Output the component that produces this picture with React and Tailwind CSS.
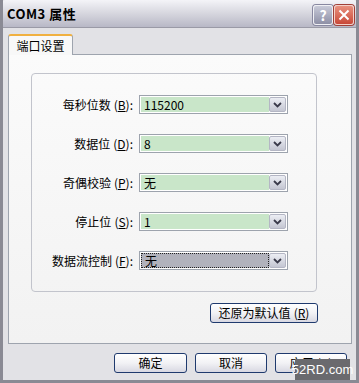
import React from "react";

const font = { fontFamily: '"Noto Sans CJK SC", "Liberation Sans", sans-serif' };

function Key({ k }) {
  return (
    <span className="ml-[3px]">
      (<span className="underline">{k}</span>)
    </span>
  );
}

function Arrow() {
  return (
    <div className="w-[17px] h-full flex items-center justify-center bg-gradient-to-b from-[#eceef4] to-[#c4c6d2] border border-[#b4b6c4] rounded-[2px]">
      <svg width="9" height="6" viewBox="0 0 9 6">
        <path d="M1 1 L4.5 4.5 L8 1" stroke="#3a3a4a" strokeWidth="1.8" fill="none" />
      </svg>
    </div>
  );
}

function Row({ label, k, value, focused }) {
  return (
    <div className="flex items-center h-[19px]">
      <div className="w-[102px] text-right text-[12px] text-black pr-[1px] whitespace-nowrap leading-none">
        {label}
        <Key k={k} />:
      </div>
      <div className="ml-[5px] w-[149px] h-[19px] flex border border-[#9da3ad] bg-white p-[1px]">
        <div
          className={
            "flex-1 flex items-center pl-[3px] text-[12px] leading-none " +
            (focused ? "bg-[#b1b2bc] border border-dotted border-[#222]" : "bg-[#c9e6c9]")
          }
        >
          {value}
        </div>
        <Arrow />
      </div>
    </div>
  );
}

function Btn({ children, w }) {
  return (
    <div
      className={
        "h-[20px] flex items-center justify-center text-[12px] text-black rounded-[3px] border border-[#1f3a6e] bg-gradient-to-b from-[#ffffff] via-[#f2f2f5] to-[#d8d8e2] leading-none " +
        w
      }
    >
      {children}
    </div>
  );
}

export default function App() {
  return (
    <div style={font} className="w-[359px] h-[383px] relative overflow-hidden bg-[#e2e2e6] border-x-[3px] border-b-[3px] border-[#8a8a94] flex flex-col">
      {/* title bar */}
      <div className="h-[28px] -mx-[3px] flex items-center justify-between bg-gradient-to-b from-[#f4f4f8] via-[#d6d6de] to-[#b8b8c6] border-b border-[#9a9aa6] rounded-t-[6px]">
        <div className="pl-[7px] text-[13px] font-bold text-black tracking-[0.5px]">COM3 属性</div>
        <div className="flex gap-[1px] pr-[5px] pt-[3px]">
          <div className="w-[20px] h-[20px] rounded-[3px] border border-[#f0f0f4] bg-gradient-to-b from-[#c8cad8] to-[#8e90a6] flex items-center justify-center text-white text-[14px] font-bold leading-none shadow-[0_0_0_1px_#8888a0]">?</div>
          <div className="w-[20px] h-[20px] rounded-[3px] border border-[#f4d0c8] bg-gradient-to-b from-[#e8907e] to-[#c84838] flex items-center justify-center shadow-[0_0_0_1px_#a04038]">
            <svg width="12" height="12" viewBox="0 0 12 12">
              <path d="M1.5 1.5 L10.5 10.5 M10.5 1.5 L1.5 10.5" stroke="#fff" strokeWidth="2" />
            </svg>
          </div>
        </div>
      </div>

      {/* body */}
      <div className="flex-1 flex flex-col pl-[5px] pr-[4px] pt-[6px]">
        <div className="flex">
          <div className="w-[65px] h-[21px] -mb-[1px] relative z-10 bg-[#f8f8f8] border-x border-[#9ea4ae] border-t-[2px] border-t-[#f0b040] rounded-t-[3px] flex items-center justify-center text-[12px] leading-none">
            端口设置
          </div>
        </div>
        <div className="h-[290px] border border-[#9ea4ae] bg-gradient-to-b from-[#fbfbfb] to-[#f2f2f2] pt-[18px] pl-[22px] pr-[34px] flex flex-col">
          <div className="h-[219px] border border-[#c2c4cc] rounded-[4px] pt-[21px] flex flex-col gap-[20px]">
            <Row label="每秒位数" k="B" value="115200" />
            <Row label="数据位" k="D" value="8" />
            <Row label="奇偶校验" k="P" value="无" />
            <Row label="停止位" k="S" value="1" />
            <Row label="数据流控制" k="F" value="无" focused />
          </div>
          <div className="flex justify-end pt-[11px] -mr-[1px]">
            <Btn w="w-[108px]">
              还原为默认值<Key k="R" />
            </Btn>
          </div>
        </div>
        <div className="flex justify-end gap-[8px] pt-[9px] pr-[5px]">
          <Btn w="w-[73px]">确定</Btn>
          <Btn w="w-[72px]">取消</Btn>
          <Btn w="w-[72px]">
            应用<Key k="A" />
          </Btn>
        </div>
      </div>

      <div className="absolute right-[6px] bottom-0 w-[55px] h-[21px] bg-[#6a6a6e] text-white text-[13px] flex items-center justify-center leading-none" style={{ fontFamily: '"Liberation Sans", sans-serif' }}>
        52RD.com
      </div>
    </div>
  );
}
